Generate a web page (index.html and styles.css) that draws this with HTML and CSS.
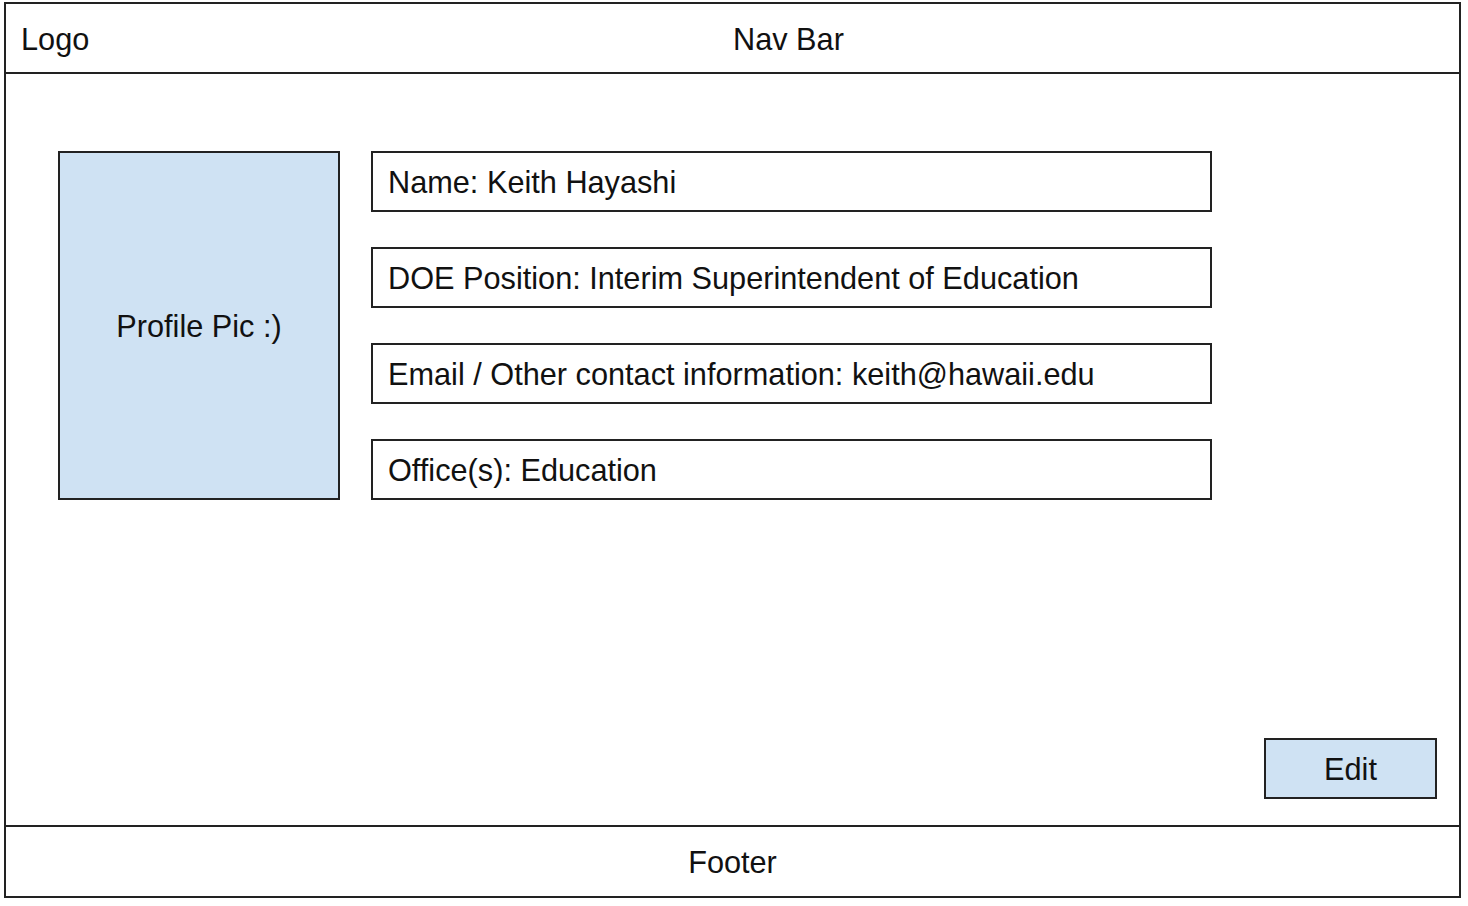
FILE: index.html
```html
<!DOCTYPE html>
<html lang="en">
<head>
<meta charset="utf-8">
<title>Profile</title>
<link rel="stylesheet" href="styles.css">
</head>
<body>
<div class="frame">
  <header class="nav">
    <div class="logo">Logo</div>
    <div class="nav-title">Nav Bar</div>
  </header>
  <main class="main">
    <div class="profile">
      <div class="pic">Profile Pic :)</div>
      <div class="fields">
        <div class="field">Name: Keith Hayashi</div>
        <div class="field">DOE Position: Interim Superintendent of Education</div>
        <div class="field">Email / Other contact information: keith@hawaii.edu</div>
        <div class="field">Office(s): Education</div>
      </div>
    </div>
    <div class="actions">
      <button class="edit">Edit</button>
    </div>
  </main>
  <footer class="footer">Footer</footer>
</div>
</body>
</html>
```
FILE: styles.css
```css
html, body {
  margin: 0;
  padding: 0;
  background: #ffffff;
}
body {
  font-family: "Liberation Sans", Arial, sans-serif;
  font-size: 30.7px;
  color: #111;
}
.frame {
  margin: 2px 0 0 4px;
  width: 1457px;
  height: 896px;
  box-sizing: border-box;
  border: 2px solid #222;
  display: flex;
  flex-direction: column;
}
.nav {
  height: 70px;
  box-sizing: border-box;
  border-bottom: 2px solid #222;
  display: flex;
  align-items: center;
  padding: 3px 0 0 15px;
}
.logo {
  width: 712px;
}
.main {
  height: 751px;
  box-sizing: border-box;
  padding: 77px 22px 26px 52px;
  display: flex;
  flex-direction: column;
  justify-content: space-between;
}
.profile {
  display: flex;
  gap: 31px;
}
.pic {
  width: 282px;
  height: 349px;
  box-sizing: border-box;
  background: #cfe2f3;
  border: 2px solid #222;
  display: flex;
  align-items: center;
  justify-content: center;
  padding-top: 2px;
}
.fields {
  display: flex;
  flex-direction: column;
  gap: 35px;
}
.field {
  width: 841px;
  height: 61px;
  box-sizing: border-box;
  border: 2px solid #222;
  display: flex;
  align-items: center;
  padding: 2px 0 0 15px;
}
.actions {
  display: flex;
  justify-content: flex-end;
}
.edit {
  width: 173px;
  height: 61px;
  box-sizing: border-box;
  background: #cfe2f3;
  border: 2px solid #222;
  font-family: inherit;
  font-size: 30.7px;
  color: #111;
  padding: 2px 0 0 0;
}
.footer {
  flex: 1;
  border-top: 2px solid #222;
  display: flex;
  align-items: center;
  justify-content: center;
  padding-top: 2px;
}
```
